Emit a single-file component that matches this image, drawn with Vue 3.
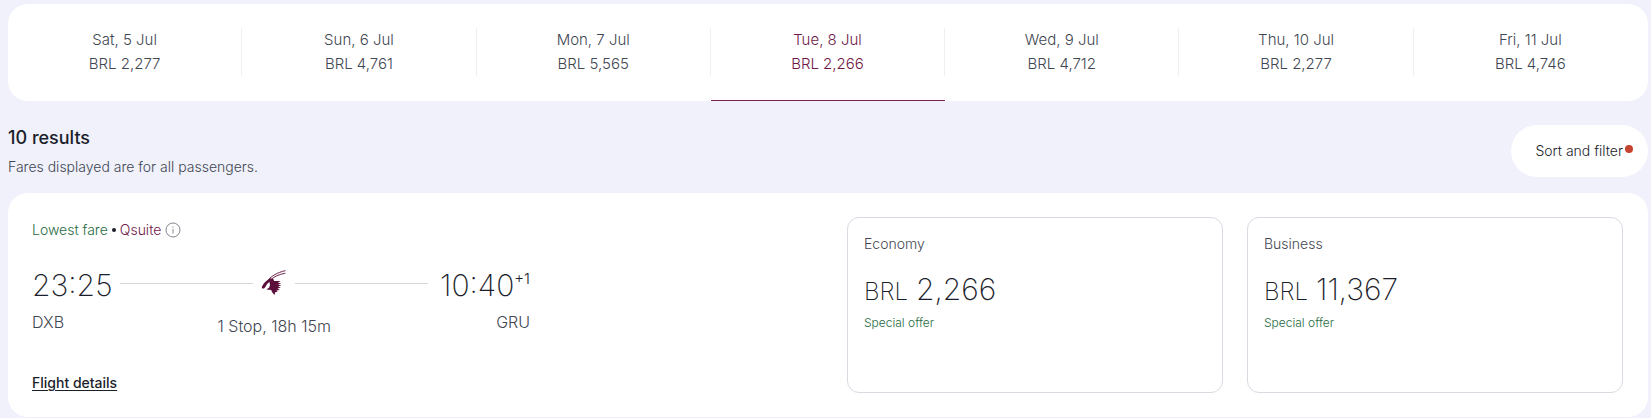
<script setup>
import { ref } from 'vue'

const days = [
  { date: 'Sat, 5 Jul', fare: 'BRL 2,277' },
  { date: 'Sun, 6 Jul', fare: 'BRL 4,761' },
  { date: 'Mon, 7 Jul', fare: 'BRL 5,565' },
  { date: 'Tue, 8 Jul', fare: 'BRL 2,266' },
  { date: 'Wed, 9 Jul', fare: 'BRL 4,712' },
  { date: 'Thu, 10 Jul', fare: 'BRL 2,277' },
  { date: 'Fri, 11 Jul', fare: 'BRL 4,746' },
]
const selected = ref(3)

const cabins = [
  { name: 'Economy', currency: 'BRL', amount: '2,266', note: 'Special offer' },
  { name: 'Business', currency: 'BRL', amount: '11,367', note: 'Special offer' },
]
</script>

<template>
  <main class="page">
    <nav class="days" aria-label="Departure date">
      <button
        v-for="(day, i) in days"
        :key="day.date"
        type="button"
        class="day"
        :class="{ selected: i === selected }"
        :aria-pressed="i === selected"
        @click="selected = i"
      >
        <span class="day-text">
          <span>{{ day.date }}</span>
          <span>{{ day.fare }}</span>
        </span>
      </button>
    </nav>

    <header class="summary">
      <div>
        <h1>10 results</h1>
        <p>Fares displayed are for all passengers.</p>
      </div>
      <button type="button" class="filter">Sort and filter<span class="dot"></span></button>
    </header>

    <article class="offer">
      <section class="flight">
        <div class="tags">
          <span class="lowest">Lowest fare</span>
          <span class="bullet"></span>
          <span class="qsuite">Qsuite</span>
          <button type="button" class="info" aria-label="About Qsuite">
            <svg width="16" height="16" viewBox="0 0 16 16" fill="none" stroke="#84868f">
              <circle cx="8" cy="8" r="7" />
              <path d="M8 7v4.500M8 4.500v1.200" />
            </svg>
          </button>
        </div>

        <div class="route">
          <div class="stop">
            <time class="clock">23:25</time>
            <span class="airport">DXB</span>
          </div>
          <div class="leg">
            <div class="track">
              <span class="line"></span>
              <svg class="oryx" width="26" height="26" viewBox="0 0 26 26" aria-hidden="true">
                <g fill="none" stroke="#5c0f3a" stroke-width="0.900">
                  <path d="M7.500 9.500C10.500 6.200 16 2.600 24.500 0.600" />
                  <path d="M9.500 10C13 6.600 18 4.400 24.300 3.200" />
                </g>
                <g fill="#5c0f3a">
                  <path d="M10.500 7.800C6.200 9.400 3.200 12.400 1 16.400C.4 18 1.400 19 3 18.400C4.600 17.300 5 15 6.600 13.400L9 11.600Z" />
                  <path d="M9.500 9L12 8.400L13.200 11L19.500 11L16.800 12.800L20.400 13.200L17 14.600L20.400 15.400L17 16.600L19.800 17.800L16.400 18.600L18.800 20L15.400 20.400L16.600 22L14.400 22L13.400 25L11 22L10.200 20L5.400 19.400L8.200 17.600L9 14.800L8.400 12Z" />
                </g>
              </svg>
              <span class="line"></span>
            </div>
            <span class="duration">1 Stop, 18h 15m</span>
          </div>
          <div class="stop arrival">
            <time class="clock">10:40<sup>+1</sup></time>
            <span class="airport">GRU</span>
          </div>
        </div>

        <a href="#details" class="details">Flight details</a>
      </section>

      <section class="cabins">
        <button v-for="cabin in cabins" :key="cabin.name" type="button" class="cabin">
          <span class="cabin-name">{{ cabin.name }}</span>
          <span class="price"><span class="currency">{{ cabin.currency }}</span>{{ cabin.amount }}</span>
          <span class="note">{{ cabin.note }}</span>
        </button>
      </section>
    </article>
  </main>
</template>

<style>
body {
  background: #f0f1fa;
}
</style>

<style scoped>
.page {
  padding: 4px 3px 1px 8px;
  font-family: Inter, Roboto, "Liberation Sans", sans-serif;
  font-size: 15px;
  font-weight: 300;
  line-height: 24px;
  color: #3f4752;
}
button {
  font: inherit;
  color: inherit;
  border: 0;
  padding: 0;
  background: none;
  cursor: pointer;
}
.days {
  display: grid;
  grid-template-columns: repeat(7, 1fr);
  background: #fff;
  border-radius: 20px;
  overflow: hidden;
}
.day {
  padding: 24px 0;
  border-bottom: 1px solid transparent;
}
.day-text {
  display: flex;
  flex-direction: column;
  border-right: 1px solid #eeeef3;
}
.day:last-child .day-text {
  border-right-color: transparent;
}
.day.selected {
  color: #6f1747;
  border-bottom-color: #7a2553;
}
.summary {
  display: flex;
  justify-content: space-between;
  align-items: center;
  padding: 24px 0 16px;
}
h1 {
  margin: 0 0 6px;
  font-size: 18px;
  font-weight: 500;
  line-height: 26px;
  color: #1b1e2b;
}
p {
  margin: 0;
  font-size: 14px;
  line-height: 20px;
}
.filter {
  display: flex;
  align-items: center;
  gap: 2px;
  height: 52px;
  padding: 0 15px 0 24px;
  border-radius: 26px;
  background: #fff;
  color: #1b1e2b;
  font-size: 14px;
}
.dot {
  width: 8px;
  height: 8px;
  margin-bottom: 4px;
  border-radius: 50%;
  background: #c5432f;
}
.offer {
  display: grid;
  grid-template-columns: minmax(0, 791fr) minmax(0, 776fr);
  gap: 24px;
  padding: 24px 25px 24px 24px;
  border-radius: 20px;
  background: #fff;
}
.flight {
  display: flex;
  flex-direction: column;
  align-items: flex-start;
}
.tags {
  display: flex;
  align-items: center;
  gap: 4px;
  height: 26px;
  font-size: 14px;
}
.lowest,
.note {
  color: #1f6b43;
}
.bullet {
  width: 4px;
  height: 4px;
  border-radius: 50%;
  background: #1b1e2b;
}
.qsuite {
  color: #6f1747;
}
.info {
  display: flex;
}
.route {
  display: flex;
  width: 100%;
  max-width: 498px;
  margin-top: 20px;
}
.stop {
  display: flex;
  flex-direction: column;
  gap: 3px;
}
.arrival {
  align-items: flex-end;
  padding-left: 4px;
}
.clock {
  display: flex;
  font-size: 30px;
  font-weight: 200;
  line-height: 44px;
  color: #1b1e2b;
}
sup {
  padding-top: 6px;
  font-size: 15px;
  font-weight: 300;
  line-height: 20px;
}
.leg {
  flex: 1;
  display: flex;
  flex-direction: column;
  align-items: center;
  gap: 13px;
}
.track {
  display: flex;
  align-items: center;
  gap: 8px;
  width: 100%;
  height: 40px;
  padding: 0 8px;
  box-sizing: border-box;
}
.line {
  flex: 1;
  height: 1px;
  background: #d5d6dc;
}
.duration {
  font-size: 16px;
  line-height: 20px;
}
.airport {
  font-size: 16px;
}
.details {
  margin-top: auto;
  font-size: 14px;
  font-weight: 500;
  line-height: 20px;
  color: #1b1e2b;
  text-underline-offset: 2px;
}
.cabins {
  display: grid;
  grid-template-columns: 1fr 1fr;
  gap: 24px;
}
.cabin {
  display: flex;
  flex-direction: column;
  align-items: flex-start;
  min-height: 176px;
  padding: 16px;
  border: 1px solid #d9dae2;
  border-radius: 12px;
  text-align: left;
}
.cabin-name {
  font-size: 14px;
  line-height: 20px;
}
.price {
  display: flex;
  align-items: baseline;
  gap: 8px;
  margin-top: 14px;
  font-size: 30px;
  font-weight: 200;
  line-height: 42px;
  color: #1b1e2b;
}
.currency {
  font-size: 24px;
}
.note {
  font-size: 12px;
  line-height: 20px;
}
</style>
